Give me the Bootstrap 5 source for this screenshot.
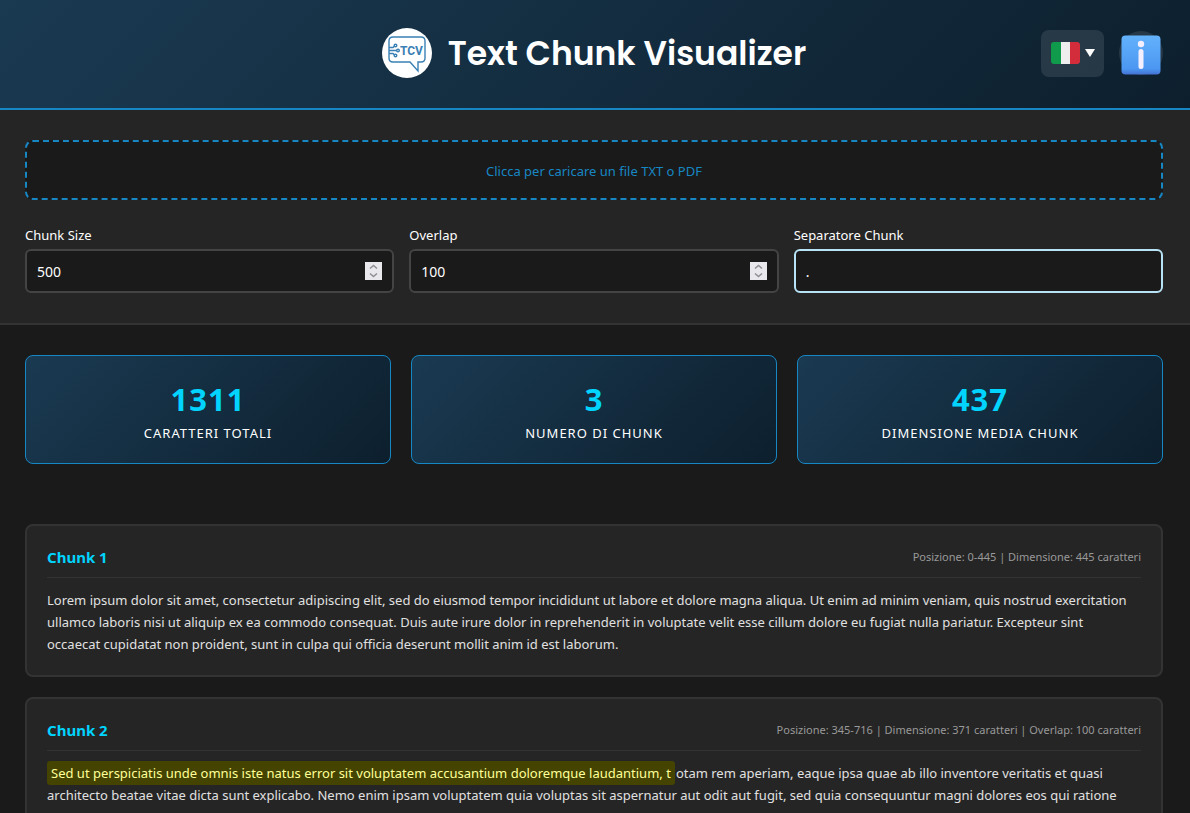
<!DOCTYPE html>
<html lang="it">
<head>
<meta charset="utf-8">
<meta name="viewport" content="width=device-width, initial-scale=1">
<title>Text Chunk Visualizer</title>
<link href="https://cdn.jsdelivr.net/npm/bootstrap@5.3.0/dist/css/bootstrap.min.css" rel="stylesheet">
<style>
  :root { --line: #333; --accent: #1787c4; --cyan: #00d4ff; --deep: linear-gradient(135deg, #1a3a52 0%, #0d1f2d 100%); }
  body { background: #1a1a1a; color: #e0e0e0; font-family: "Segoe UI", "Noto Sans", sans-serif; font-size: 13px; line-height: 22px; }
  .gutter { padding-left: 25px; padding-right: 27px; }
  .app-header { background: var(--deep); border-bottom: 2px solid var(--accent); display: grid; grid-template-columns: 1fr auto 1fr; min-height: 110px; padding-bottom: 2px; }
  .app-header h1 { font-family: Poppins, Inter, sans-serif; font-size: 33px; line-height: 48px; font-weight: 600; color: #fff; padding-top: 2px; }
  .brand { gap: 16px; }
  .tools { gap: 15px; }
  .lang-btn { background: #ffffff1a; border: 0; border-radius: 8px; width: 63px; height: 47px; gap: 5px; }
  .info-btn { background: #ffffff1a; border: 0; width: 44px; height: 44px; }
  .controls { background: #252525; border-bottom: 2px solid var(--line); padding-top: 30px; padding-bottom: 30px; }
  .drop-zone { background: #1a1a1a; color: var(--accent); border: 2px dashed var(--accent); border-radius: 8px; height: 60px; padding-top: 2px; }
  .drop-zone:hover { color: var(--cyan); }
  .fields { display: grid; grid-template-columns: repeat(3, 1fr); gap: 15px; margin-top: 24px; }
  .fields label { color: #fff; margin-bottom: 3px; display: block; }
  .fields .form-control { background: #1a1a1a; color: #fff; border: 2px solid #444; border-radius: 6px; height: 44px; padding: 0 10px; font-size: 14px; }
  .fields .form-control.active-field { border-color: #b8e2f5; }
  input[type=number]::-webkit-inner-spin-button {
    -webkit-appearance: none; opacity: 1; width: 17px; height: 18px;
    background: #e9e9ed url("data:image/svg+xml,%3Csvg xmlns='http://www.w3.org/2000/svg' width='17' height='18' fill='none' stroke='%23909094' stroke-width='1.6'%3E%3Cpath d='M5 6.5 8.5 3.5 12 6.5M5 11.5 8.5 14.5 12 11.5'/%3E%3C/svg%3E") no-repeat;
  }
  .stats { display: grid; grid-template-columns: repeat(3, 1fr); gap: 20px; padding-top: 30px; padding-bottom: 60px; }
  .stat-box { background: var(--deep); border: 1px solid var(--accent); border-radius: 8px; padding: 20px; }
  .stat-num { color: var(--cyan); font-size: 31px; line-height: 46px; font-weight: 700; letter-spacing: 1px; }
  .stat-name { color: #fff; line-height: 21px; letter-spacing: 1px; text-transform: uppercase; padding-top: 1px; margin-bottom: -1px; }
  .chunk { background: #252525; border: 2px solid var(--line); border-radius: 8px; padding: 20px; margin-bottom: 20px; }
  .chunk-head { border-bottom: 1px solid var(--line); padding-bottom: 9px; margin-bottom: 11px; }
  .chunk h2 { color: var(--cyan); font-size: 15px; line-height: 22px; font-weight: 700; }
  .chunk p { padding-right: 4px; }
  .meta { color: #999; font-size: 11px; }
  .overlap { background: #444400; color: #ffff99; border-radius: 3px; padding: 3px 4px; margin-right: 1px; }
</style>
</head>
<body>
<header class="app-header gutter align-items-center">
  <div></div>
  <div class="brand d-flex align-items-center">
    <svg width="50" height="50" viewBox="0 0 50 50" role="img" aria-label="TCV">
      <circle cx="25" cy="25" r="25" fill="#fff"/>
      <g fill="none" stroke="#3a80b4" stroke-width="1.4">
        <path d="M11 9H39Q43 9 43 13V30Q43 34 39 34H36V43L28 34H11Q7 34 7 30V13Q7 9 11 9Z"/>
        <path d="M7 19.500H11L12.500 18M7 22.500H15M7 25.500H11L12.500 27"/>
        <circle cx="13.500" cy="17.500" r="1.300"/><circle cx="16" cy="22.500" r="1.300"/><circle cx="13.500" cy="27.500" r="1.300"/>
      </g>
      <text x="18" y="27" font-family="Roboto, sans-serif" font-weight="700" font-size="12" fill="#3a80b4">TCV</text>
    </svg>
    <h1 class="mb-0">Text Chunk Visualizer</h1>
  </div>
  <div class="tools d-flex align-items-center justify-content-end">
    <button type="button" class="lang-btn d-flex align-items-center justify-content-center p-0" aria-label="Lingua: italiano">
      <svg width="29" height="22" viewBox="0 0 29 22"><defs><clipPath id="flag"><rect width="29" height="22" rx="3"/></clipPath></defs><g clip-path="url(#flag)"><path fill="#109a4c" d="M0 0h10v22H0z"/><path fill="#eee" d="M10 0h9v22h-9z"/><path fill="#d32d3c" d="M19 0h10v22H19z"/></g></svg>
      <svg width="10" height="8" viewBox="0 0 10 8"><path fill="#fff" d="M0 0h10L5 8z"/></svg>
    </button>
    <button type="button" class="info-btn rounded-circle d-flex align-items-end justify-content-center p-0 overflow-visible" aria-label="Informazioni">
      <svg width="40" height="40" viewBox="0 0 40 40"><defs><linearGradient id="tile" x2="0" y2="1"><stop stop-color="#63b2fc"/><stop offset=".85" stop-color="#4b97f2"/><stop offset="1" stop-color="#4472d4"/></linearGradient></defs><rect x=".5" y=".5" width="39" height="39" rx="4" fill="url(#tile)"/><circle cx="20" cy="9" r="3.200" fill="#f3efff"/><rect x="17.500" y="14" width="5" height="20" rx="2.500" fill="#f3efff"/></svg>
    </button>
  </div>
</header>

<section class="controls gutter">
  <button type="button" class="drop-zone w-100 d-flex align-items-center justify-content-center">Clicca per caricare un file TXT o PDF</button>
  <div class="fields">
    <div><label for="size">Chunk Size</label><input id="size" type="number" class="form-control" value="500"></div>
    <div><label for="overlap">Overlap</label><input id="overlap" type="number" class="form-control" value="100"></div>
    <div><label for="sep">Separatore Chunk</label><input id="sep" type="text" class="form-control active-field" value="."></div>
  </div>
</section>

<main class="gutter">
  <section class="stats text-center">
    <div class="stat-box"><div class="stat-num">1311</div><div class="stat-name">Caratteri totali</div></div>
    <div class="stat-box"><div class="stat-num">3</div><div class="stat-name">Numero di chunk</div></div>
    <div class="stat-box"><div class="stat-num">437</div><div class="stat-name">Dimensione media chunk</div></div>
  </section>

  <article class="chunk">
    <div class="chunk-head d-flex justify-content-between align-items-center">
      <h2 class="mb-0">Chunk 1</h2>
      <span class="meta">Posizione: 0-445 | Dimensione: 445 caratteri</span>
    </div>
    <p class="mb-0">Lorem ipsum dolor sit amet, consectetur adipiscing elit, sed do eiusmod tempor incididunt ut labore et dolore magna aliqua. Ut enim ad minim veniam, quis nostrud exercitation ullamco laboris nisi ut aliquip ex ea commodo consequat. Duis aute irure dolor in reprehenderit in voluptate velit esse cillum dolore eu fugiat nulla pariatur. Excepteur sint occaecat cupidatat non proident, sunt in culpa qui officia deserunt mollit anim id est laborum.</p>
  </article>

  <article class="chunk">
    <div class="chunk-head d-flex justify-content-between align-items-center">
      <h2 class="mb-0">Chunk 2</h2>
      <span class="meta">Posizione: 345-716 | Dimensione: 371 caratteri | Overlap: 100 caratteri</span>
    </div>
    <p class="mb-0"><span class="overlap">Sed ut perspiciatis unde omnis iste natus error sit voluptatem accusantium doloremque laudantium, t</span>otam rem aperiam, eaque ipsa quae ab illo inventore veritatis et quasi architecto beatae vitae dicta sunt explicabo. Nemo enim ipsam voluptatem quia voluptas sit aspernatur aut odit aut fugit, sed quia consequuntur magni dolores eos qui ratione</p>
  </article>
</main>
<script src="https://cdn.jsdelivr.net/npm/bootstrap@5.3.0/dist/js/bootstrap.bundle.min.js"></script>
</body>
</html>
